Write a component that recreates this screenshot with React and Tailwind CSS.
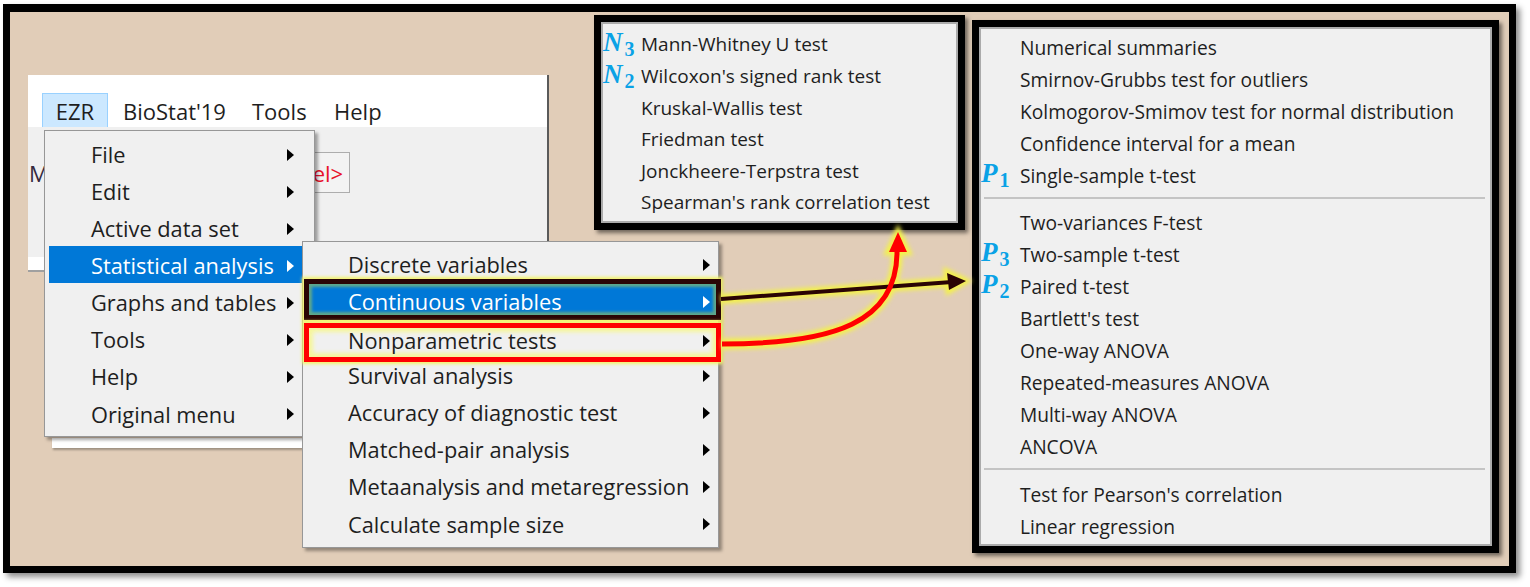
import React from "react";

function Tri({ white }) {
  return (
    <span
      className={
        white
          ? "block w-0 h-0 border-y-[6px] border-y-transparent border-l-[7px] border-l-white"
          : "block w-0 h-0 border-y-[6px] border-y-transparent border-l-[7px] border-l-black"
      }
    />
  );
}

function Label({ letter, sub, top }) {
  return (
    <span
      className={
        "absolute left-0 flex items-baseline font-['Liberation_Serif',serif] font-bold text-[#0aa2e6] leading-none " +
        top
      }
    >
      <span className="italic text-[27px]">{letter}</span>
      <span className="text-[20px] relative top-[5px] ml-[2px]">{sub}</span>
    </span>
  );
}

const mainItems = [
  "File",
  "Edit",
  "Active data set",
  "Statistical analysis",
  "Graphs and tables",
  "Tools",
  "Help",
  "Original menu",
];

const subItems = [
  "Discrete variables",
  "Continuous variables",
  "Nonparametric tests",
  "Survival analysis",
  "Accuracy of diagnostic test",
  "Matched-pair analysis",
  "Metaanalysis and metaregression",
  "Calculate sample size",
];

const nItems = [
  { t: "Mann-Whitney U test", l: "N", s: "3" },
  { t: "Wilcoxon's signed rank test", l: "N", s: "2" },
  { t: "Kruskal-Wallis test" },
  { t: "Friedman test" },
  { t: "Jonckheere-Terpstra test" },
  { t: "Spearman's rank correlation test" },
];

const pGroups = [
  [
    { t: "Numerical summaries" },
    { t: "Smirnov-Grubbs test for outliers" },
    { t: "Kolmogorov-Smimov test for normal distribution" },
    { t: "Confidence interval for a mean" },
    { t: "Single-sample t-test", l: "P", s: "1" },
  ],
  [
    { t: "Two-variances F-test" },
    { t: "Two-sample t-test", l: "P", s: "3" },
    { t: "Paired t-test", l: "P", s: "2" },
    { t: "Bartlett's test" },
    { t: "One-way ANOVA" },
    { t: "Repeated-measures ANOVA" },
    { t: "Multi-way ANOVA" },
    { t: "ANCOVA" },
  ],
  [{ t: "Test for Pearson's correlation" }, { t: "Linear regression" }],
];

function PRow({ item }) {
  return (
    <div className="relative h-[32px] pt-[1px] flex items-center pl-[39px] text-[19.2px] leading-none text-[#1e1e1e]">
      {item.l && <Label letter={item.l} sub={item.s} top="top-[1px]" />}
      <span>{item.t}</span>
    </div>
  );
}

export default function App() {
  return (
    <div className="w-[1530px] h-[587px] bg-white overflow-hidden pt-[4px] pl-[3px] font-['Open_Sans',sans-serif]">
      <div className="w-[1513px] h-[569px] border-black border-x-[7px] border-t-[8px] border-b-[7px] bg-[#e1cdb8] shadow-[4px_4px_6px_rgba(0,0,0,0.45)]">
        <div className="relative w-full h-full">
          {/* background application window */}
          <div className="absolute left-[18px] top-[63px] w-[521px] h-[197px] flex flex-col border-r-2 border-[#5a5a5a] overflow-hidden">
            <div className="h-[52px] shrink-0 bg-white flex items-start pt-[18px] pl-[14px] text-[22px] leading-none text-[#1e1e1e]">
              <div className="w-[66px] h-[35px] bg-[#cce8ff] border border-[#99d1ff] flex items-center justify-center">
                EZR
              </div>
              <div className="w-[130px] h-[35px] pl-[15px] flex items-center">BioStat'19</div>
              <div className="w-[81px] h-[35px] pl-[14px] flex items-center">Tools</div>
              <div className="h-[35px] pl-[15px] flex items-center">Help</div>
            </div>
            <div className="h-[130px] shrink-0 bg-[#f0f0f0] pt-[25px] pl-[1px] flex items-start">
              <div className="h-[41px] flex items-center text-[22px] leading-none text-[#35293d]">Model:</div>
              <div className="ml-[10px] w-[241px] h-[41px] border border-[#adadad] bg-[#f3f3f3] flex items-center justify-end pr-[6px] text-[22px] leading-none text-[#e8102a]">
                &lt;No active model&gt;
              </div>
            </div>
            <div className="h-[13px] shrink-0 bg-white" />
            <div className="h-[2px] shrink-0 bg-[#a0a0a0]" />
          </div>

          {/* white strip behind dropdown */}
          <div className="absolute left-[42px] top-[426px] w-[250px] h-[10px] bg-white shadow-[1px_2px_2px_rgba(0,0,0,0.3)]" />

          {/* main dropdown */}
          <div className="absolute left-[34px] top-[118px] w-[271px] border border-[#979797] bg-[#f0f0f0] pt-[3.5px] pb-[4.5px] shadow-[3px_3px_3px_rgba(0,0,0,0.35)]">
            {mainItems.map((t, i) => (
              <div
                key={t}
                className={
                  i === 3
                    ? "mx-[4px] h-[37.14px] pt-[3px] flex items-center justify-between pl-[42px] pr-[16px] bg-[#0078d7] text-white"
                    : "mx-[4px] h-[37.14px] pt-[3px] flex items-center justify-between pl-[42px] pr-[16px] text-[#1e1e1e]"
                }
              >
                <span className="text-[21.8px] leading-none">{t}</span>
                <Tri white={i === 3} />
              </div>
            ))}
          </div>

          {/* statistical analysis submenu */}
          <div className="absolute left-[292px] top-[229px] w-[417px] border border-[#979797] bg-[#f0f0f0] pt-[2.5px] pb-[5.4px] shadow-[3px_3px_3px_rgba(0,0,0,0.35)]">
            {subItems.map((t) => (
              <div
                key={t}
                className="mx-[3px] h-[37.14px] pt-[3px] flex items-center justify-between pl-[42px] pr-[5px] text-[#1e1e1e]"
              >
                <span className="text-[21.8px] leading-none">{t}</span>
                <Tri />
              </div>
            ))}

            {/* annotation: continuous variables */}
            <div className="absolute left-[1px] top-[37px] w-[417px] h-[41px] border-[5px] border-[#2a0505] bg-[#0078d7] shadow-[0_0_3px_2px_#f3f36a,inset_0_0_3px_3px_#5fa88a] flex items-center justify-between pt-[4px] pl-[39px] pr-[6px] text-white">
              <span className="text-[21.8px] leading-none">Continuous variables</span>
              <Tri white />
            </div>

            {/* annotation: nonparametric tests */}
            <div className="absolute left-[1px] top-[81px] w-[417px] h-[39px] border-[5px] border-[#ff0000] bg-[#f0f0f0] shadow-[0_0_3px_2px_#f3f36a,inset_0_0_4px_4px_#f6f69a] flex items-center justify-between pb-[4px] pl-[39px] pr-[6px] text-[#1e1e1e]">
              <span className="text-[21.8px] leading-none">Nonparametric tests</span>
              <Tri />
            </div>
          </div>

          {/* Nonparametric submenu panel */}
          <div className="absolute left-[584px] top-[3px] w-[371px] h-[215px] border-[7px] border-black shadow-[3px_3px_4px_rgba(0,0,0,0.5)]">
            <div className="h-full border-2 border-[#ababab] bg-[#f0f0f0] pt-[5.2px]">
              {nItems.map((it) => (
                <div
                  key={it.t}
                  className="relative h-[31.6px] flex items-center pl-[38px] text-[19px] leading-none text-[#1e1e1e]"
                >
                  {it.l && <Label letter={it.l} sub={it.s} top="top-0" />}
                  <span>{it.t}</span>
                </div>
              ))}
            </div>
          </div>

          {/* Continuous variables submenu panel */}
          <div className="absolute left-[962px] top-[8px] w-[527px] h-[533px] border-[7px] border-black shadow-[3px_3px_4px_rgba(0,0,0,0.5)]">
            <div className="h-full border-2 border-[#ababab] bg-[#f0f0f0] pt-[2px]">
              {pGroups[0].map((it) => (
                <PRow key={it.t} item={it} />
              ))}
              <div className="h-[15px] pt-[6px]">
                <div className="ml-[3px] mr-[5px] h-[2px] bg-[#c4c4c4]" />
              </div>
              {pGroups[1].map((it) => (
                <PRow key={it.t} item={it} />
              ))}
              <div className="h-[16px] pt-[6px]">
                <div className="ml-[3px] mr-[5px] h-[2px] bg-[#c4c4c4]" />
              </div>
              {pGroups[2].map((it) => (
                <PRow key={it.t} item={it} />
              ))}
            </div>
          </div>

          {/* annotation arrows */}
          <svg
            className="absolute left-0 top-0 pointer-events-none overflow-visible"
            width="1499"
            height="554"
          >
            <defs>
              <filter id="glow" x="-10%" y="-10%" width="120%" height="120%">
                <feGaussianBlur stdDeviation="2" />
              </filter>
            </defs>
            <g transform="translate(-10,-12)">
              <g filter="url(#glow)">
                <line x1="721" y1="299" x2="952" y2="282" stroke="#f4f24a" strokeWidth="10" />
                <polygon points="967,281 946,271 948,292" fill="#f4f24a" stroke="#f4f24a" strokeWidth="5" />
                <path d="M722 344 C835 344 897 322 897 252" stroke="#f4f24a" strokeWidth="11" fill="none" />
                <polygon points="898,230 887,253 909,253" fill="#f4f24a" stroke="#f4f24a" strokeWidth="5" />
              </g>
              <line x1="721" y1="299" x2="952" y2="282" stroke="#2a0404" strokeWidth="4" />
              <polygon points="966,281 947,273 949,290" fill="#2a0404" />
              <path d="M722 344 C835 344 897 322 897 252" stroke="#ff0000" strokeWidth="5" fill="none" />
              <polygon points="898,232 889,252 907,252" fill="#ff0000" />
            </g>
          </svg>
        </div>
      </div>
    </div>
  );
}
